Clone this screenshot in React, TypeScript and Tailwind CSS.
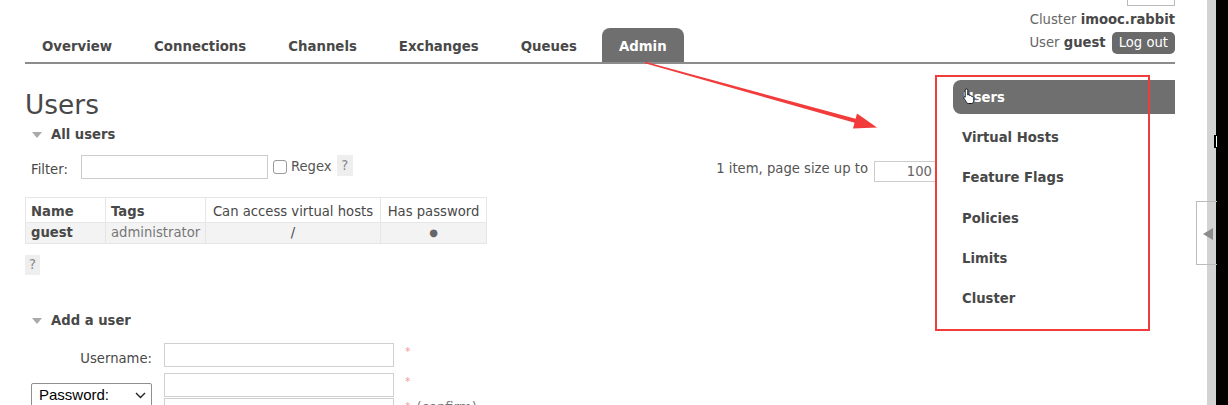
import React from "react";

const tabs = ["Overview", "Connections", "Channels", "Exchanges", "Queues", "Admin"];
const side = ["Users", "Virtual Hosts", "Feature Flags", "Policies", "Limits", "Cluster"];

function Tri() {
  return (
    <span className="ml-[7px] mr-[9px] inline-block h-0 w-0 border-x-[5.5px] border-t-[6px] border-x-transparent border-t-[#aaaaaa]" />
  );
}

export default function App() {
  return (
    <div className="relative flex h-[405px] w-[1228px] overflow-hidden bg-white font-['DejaVu_Sans','Verdana',sans-serif] text-[13.2px] text-[#484848]">
      <div className="w-[1207px] shrink-0 pl-[25px] pr-[32px]">
        {/* header */}
        <header className="flex h-[64px] items-end justify-between border-b-2 border-[#8c8c8c]">
          <ul className="flex items-end">
            {tabs.map((t) => (
              <li
                key={t}
                className={
                  t === "Admin"
                    ? "mr-[8px] flex h-[34px] items-center rounded-t-[8px] bg-[#6f6f6f] px-[17px] pt-[3px] text-[13.3px] font-bold text-white"
                    : "mr-[8px] flex h-[34px] items-center px-[17px] pt-[3px] text-[13.3px] font-bold text-[#484848]"
                }
              >
                {t}
              </li>
            ))}
          </ul>
          <div className="flex flex-col items-end pb-[8px]">
            <div className="h-[6px] w-[48px] border border-t-0 border-[#bbbbbb]" />
            <div className="mt-[5px] leading-[18px]">
              <span className="text-[#666]">Cluster </span>
              <span className="font-bold">imooc.rabbit</span>
            </div>
            <div className="mt-[3px] flex h-[22px] items-center">
              <span className="text-[#666]">User&nbsp;</span>
              <span className="font-bold">guest</span>
              <span className="ml-[6px] h-[22px] rounded-[5px] bg-[#6a6a6a] px-[7px] leading-[22px] text-white">
                Log out
              </span>
            </div>
          </div>
        </header>

        {/* title */}
        <h1 className="mt-[27px] text-[26.4px] font-normal leading-[27px] text-[#484848]">Users</h1>

        <div className="mt-[8px] flex h-[18px] items-center font-bold">
          <Tri />
          All users
        </div>

        {/* filter row */}
        <div className="mt-[11px] flex h-[24px] items-start">
          <span className="ml-[6px] mt-[6px] leading-[18px]">Filter:</span>
          <div className="ml-[13px] h-[24px] w-[187px] border border-[#cccccc]" />
          <div className="ml-[5px] mt-[5px] h-[14px] w-[14px] rounded-[3px] border border-[#999999]" />
          <span className="ml-[4px] mt-[3px] leading-[18px] text-[#555]">Regex</span>
          <span className="ml-[5px] flex h-[21px] w-[16px] items-center justify-center bg-[#eeeeee] text-[#888]">?</span>
          <div className="ml-auto mr-[239px] flex items-start">
            <span className="mt-[5px] leading-[18px] text-[#555]">1 item, page size up to</span>
            <div className="ml-[6px] mt-[6px] flex h-[21px] w-[62px] items-center justify-end border border-[#cccccc] pr-[3px] text-[#666]">
              100
            </div>
          </div>
        </div>

        {/* table */}
        <table className="mt-[18px] w-[461px] table-fixed border-collapse">
          <colgroup>
            <col className="w-[80px]" />
            <col className="w-[100px]" />
            <col className="w-[175px]" />
            <col className="w-[106px]" />
          </colgroup>
          <thead>
            <tr className="h-[25px]">
              <th className="border border-[#e6e6e6] px-[5px] pt-[3px] text-left font-bold leading-[18px]">Name</th>
              <th className="border border-[#e6e6e6] px-[5px] pt-[3px] text-left font-bold leading-[18px]">Tags</th>
              <th className="whitespace-nowrap border border-[#e6e6e6] px-0 pt-[3px] text-center font-normal leading-[18px]">Can access virtual hosts</th>
              <th className="whitespace-nowrap border border-[#e6e6e6] px-0 pt-[3px] text-center font-normal leading-[18px]">Has password</th>
            </tr>
          </thead>
          <tbody>
            <tr className="h-[21px] bg-[#f3f3f3]">
              <td className="border border-[#e6e6e6] px-[5px] font-bold leading-[18px]">guest</td>
              <td className="border border-[#e6e6e6] px-[5px] leading-[18px] text-[#777]">administrator</td>
              <td className="border border-[#e6e6e6] text-center leading-[18px]">/</td>
              <td className="border border-[#e6e6e6] text-center text-[10px] leading-[18px] text-[#666]">●</td>
            </tr>
          </tbody>
        </table>

        <div className="mt-[11px] flex h-[20px] w-[15px] items-center justify-center bg-[#eeeeee] text-[#888]">?</div>

        <div className="mt-[37px] flex h-[18px] items-center font-bold">
          <Tri />
          Add a user
        </div>

        {/* form */}
        <div className="mt-[13px] flex flex-col gap-[6px]">
          <div className="flex h-[24px] items-start">
            <div className="mt-[8px] w-[127px] text-right leading-[16px]">Username:</div>
            <div className="ml-[12px] h-[24px] w-[230px] border border-[#d0d0d0]" />
            <span className="ml-[11px] mt-[1px] text-[11px] text-[#f59a9a]">*</span>
          </div>
          <div className="flex items-start">
            <div className="w-[127px] pl-[6px] pt-[10px]">
              <div className="flex h-[25px] w-[121px] items-center justify-between rounded-[2px] border border-[#8f8f8f] pl-[7px] pr-[5px] font-['Liberation_Sans','Arial',sans-serif] text-[15px] text-black">
                <span>Password:</span>
                <svg width="11" height="7" viewBox="0 0 11 7">
                  <path d="M1 1 L5.5 5.5 L10 1" fill="none" stroke="#222" strokeWidth="1.4" />
                </svg>
              </div>
            </div>
            <div className="ml-[12px] flex flex-col gap-[1px]">
              <div className="flex items-start">
                <div className="h-[24px] w-[230px] border border-[#d0d0d0]" />
                <span className="ml-[11px] mt-[1px] text-[11px] text-[#f59a9a]">*</span>
              </div>
              <div className="flex items-start">
                <div className="h-[24px] w-[230px] border border-[#d0d0d0]" />
                <span className="ml-[11px] mt-[1px] text-[11px] text-[#f59a9a]">*</span>
                <span className="ml-[6px] text-[#777]">(confirm)</span>
              </div>
            </div>
          </div>
        </div>
      </div>

      {/* scrollbar strip */}
      <div className="w-[9px] shrink-0 bg-[#d3d3d3]" />
      <div className="flex-1 bg-black" />

      {/* side tab */}
      <div className="absolute left-[1196px] top-[201px] h-[64px] w-[21px] border border-r-0 border-[#bbbbbb]">
        <span className="absolute left-[6px] top-[26px] h-0 w-0 border-y-[6px] border-r-[10px] border-y-transparent border-r-[#8c8c8c]" />
      </div>
      <div className="absolute left-[1214px] top-[135px] h-[13px] w-[3px] border-y border-l-2 border-black bg-white" />

      {/* admin side menu */}
      <div className="absolute left-[953px] top-[80px] flex w-[222px] flex-col gap-[6.2px]">
        {side.map((s, i) => (
          <div
            key={s}
            className={
              i === 0
                ? "flex h-[34px] items-center rounded-l-[8px] bg-[#6f6f6f] pl-[10px] pt-[2px] font-bold text-white"
                : "flex h-[34px] items-center pl-[9px] pt-[2px] font-bold text-[#484848]"
            }
          >
            {s}
          </div>
        ))}
      </div>

      {/* cursor */}
      <svg className="absolute left-[963px] top-[88px]" width="13" height="17" viewBox="0 0 13 17">
        <path
          d="M3.5 1 C4.3 1 4.8 1.5 4.8 2.3 V7 L5.2 6.8 C5.8 6.5 6.5 6.8 6.6 7.4 C7.2 7.1 7.9 7.4 8 8 C8.6 7.8 9.3 8.1 9.4 8.8 C10 8.6 10.8 9 10.8 9.8 V12.5 C10.8 14 9.8 15.5 8.5 15.5 H5.5 C4.6 15.5 4 15.1 3.5 14.4 L1 10.3 C0.6 9.7 0.8 9 1.4 8.8 C1.9 8.6 2.3 8.8 2.2 9.2 V2.3 C2.2 1.5 2.7 1 3.5 1Z"
          fill="white"
          stroke="black"
          strokeWidth="0.9"
        />
      </svg>

      {/* red annotation box */}
      <div className="pointer-events-none absolute left-[935px] top-[75px] h-[256px] w-[215px] border-2 border-[#f23b3b]" />

      {/* red arrow */}
      <svg className="pointer-events-none absolute left-0 top-0" width="1228" height="405">
        <polygon points="645.2,61.8 644.8,63.2 855.5,123 856.5,119" fill="#f23b3b" />
        <polygon points="877,127.5 857,113.5 853,128.5" fill="#f23b3b" />
      </svg>
    </div>
  );
}
